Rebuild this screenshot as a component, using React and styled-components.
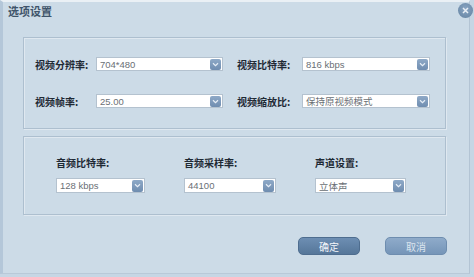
import React from "react";
import styled, { createGlobalStyle } from "styled-components";

const Global = createGlobalStyle`
  html, body { margin: 0; padding: 0; background: #c6d6e4; }
  body { font-family: "Liberation Sans", "Noto Sans CJK SC", sans-serif; }
  * { box-sizing: border-box; }
`;

const Window = styled.div`
  position: relative;
  width: 470px;
  height: 274px;
  background: #ccdbe7;
  border-left: 3px solid #b4c7d9;
  border-top: 2px solid #eaf0f5;
  border-right: 1px solid #b3c4d4;
  border-bottom: 1px solid #b9c9d8;
  display: flex;
  flex-direction: column;
`;

const Title = styled.div`
  height: 35px;
  padding: 2px 0 0 5px;
  font-size: 11px;
  font-weight: bold;
  color: #3f546a;
  font-family: "Noto Sans CJK SC", sans-serif;
  line-height: 14px;
`;

const Close = styled.div`
  position: absolute;
  right: -4px;
  top: 1px;
  width: 15px;
  height: 15px;
  border-radius: 50%;
  background: radial-gradient(circle at 50% 40%, #8aa6c4, #62819f);
  display: flex;
  align-items: center;
  justify-content: center;
`;

const Panel = styled.div`
  margin-left: 20px;
  width: 423px;
  height: ${(p) => p.$h}px;
  border: 1px solid #adbfcf;
  box-shadow: inset 1px 1px 0 #dfe8f0, 1px 1px 0 #dfe8f0;
`;

const UpperGrid = styled.div`
  display: grid;
  grid-template-columns: 61px 127px 14px 65px 128px;
  grid-auto-rows: 14px;
  row-gap: 23px;
  padding: 19px 0 0 11px;
  align-items: center;
`;

const LowerGrid = styled.div`
  display: grid;
  grid-template-columns: 128px 131px 100px;
  padding: 19px 0 0 32px;
`;

const Field = styled.div`
  display: flex;
  flex-direction: column;
  gap: 9px;
`;

const Label = styled.div`
  font-family: "Noto Sans CJK SC", sans-serif;
  font-size: 10px;
  font-weight: bold;
  color: #1e2934;
  line-height: 13px;
  white-space: nowrap;
`;

const Select = styled.div`
  width: ${(p) => p.$w}px;
  height: ${(p) => p.$hh || 14}px;
  background: #fff;
  border: 1px solid #b4c2cf;
  display: flex;
  align-items: center;
  justify-content: space-between;
  padding: 0 1px 0 3px;
  font-family: "Liberation Sans", "Noto Sans CJK SC", sans-serif;
  font-size: 9.5px;
  color: #6a6f75;
  white-space: nowrap;
`;

const DropBtn = styled.div`
  width: 11px;
  height: ${(p) => (p.$big ? 12 : 11)}px;
  border-radius: 2px;
  background: linear-gradient(#8ea9c7, #6f8db0);
  display: flex;
  align-items: center;
  justify-content: center;
  flex-shrink: 0;
`;

const Spacer = styled.div``;

const Buttons = styled.div`
  display: flex;
  justify-content: flex-end;
  gap: 25px;
  padding: 22px 22px 0 0;
`;

const Btn = styled.div`
  width: 62px;
  height: 18px;
  border-radius: 5px;
  background: ${(p) =>
    p.$primary
      ? "linear-gradient(#6d8eb3, #557699)"
      : "linear-gradient(#8fabca, #7595b8)"};
  border: 1px solid ${(p) => (p.$primary ? "#4e6d8f" : "#6e8daf")};
  color: ${(p) => (p.$primary ? "#f4f7fa" : "#dbe5ef")};
  font-family: "Noto Sans CJK SC", sans-serif;
  font-size: 10px;
  display: flex;
  align-items: center;
  justify-content: center;
`;

const Arrow = () => (
  <svg width="7" height="5" viewBox="0 0 7 5">
    <path d="M1 1.2 L3.5 3.6 L6 1.2" fill="none" stroke="#e6eef6" strokeWidth="1.2" />
  </svg>
);

const Drop = ({ w, h, children }) => (
  <Select $w={w} $hh={h}>
    <span>{children}</span>
    <DropBtn $big={h > 14}>
      <Arrow />
    </DropBtn>
  </Select>
);

export default function App() {
  return (
    <>
      <Global />
      <Window>
        <Title>选项设置</Title>
        <Close>
          <svg width="7" height="7" viewBox="0 0 7 7">
            <path d="M1 1 L6 6 M6 1 L1 6" stroke="#e8eef5" strokeWidth="1.5" />
          </svg>
        </Close>
        <Panel $h={92}>
          <UpperGrid>
            <Label>视频分辨率:</Label>
            <Drop w={127}>704*480</Drop>
            <Spacer />
            <Label>视频比特率:</Label>
            <Drop w={128}>816 kbps</Drop>
            <Label>视频帧率:</Label>
            <Drop w={127}>25.00</Drop>
            <Spacer />
            <Label>视频缩放比:</Label>
            <Drop w={128}>保持原视频模式</Drop>
          </UpperGrid>
        </Panel>
        <Panel $h={79} style={{ marginTop: 7 }}>
          <LowerGrid>
            <Field>
              <Label>音频比特率:</Label>
              <Drop w={89} h={15}>128 kbps</Drop>
            </Field>
            <Field>
              <Label>音频采样率:</Label>
              <Drop w={92} h={15}>44100</Drop>
            </Field>
            <Field>
              <Label>声道设置:</Label>
              <Drop w={91} h={15}>立体声</Drop>
            </Field>
          </LowerGrid>
        </Panel>
        <Buttons>
          <Btn $primary>确定</Btn>
          <Btn>取消</Btn>
        </Buttons>
      </Window>
    </>
  );
}
